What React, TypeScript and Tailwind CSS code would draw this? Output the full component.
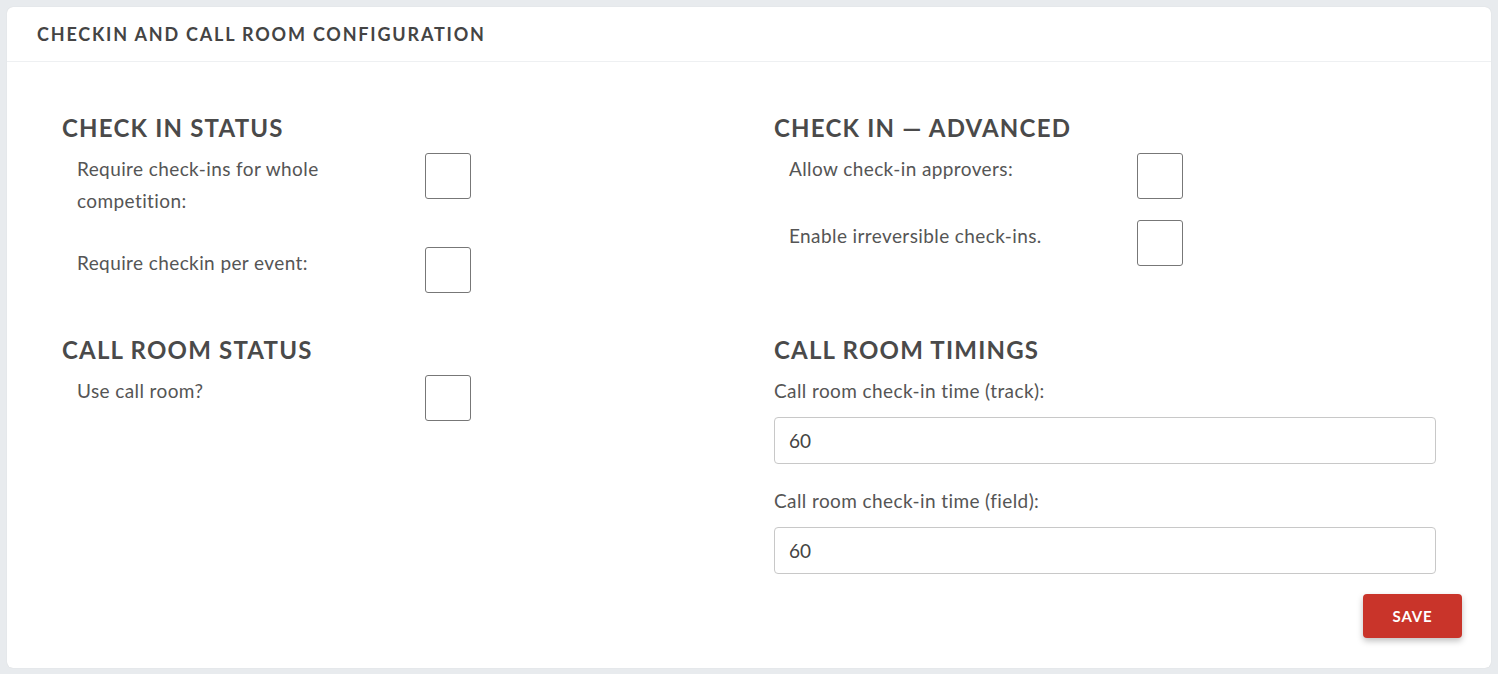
export default function App() {
  return (
    <div className="min-h-screen bg-[#e8ebee] p-[7px] font-['Lato',sans-serif] text-[#555]">
      <div className="bg-white rounded-[6px] shadow-[0_0_1px_rgba(0,0,0,0.15)]">
        <div className="h-[55px] border-b border-[#eef0f2] pl-[30px] flex items-center pt-[1px]">
          <h2 className="text-[18px] font-bold tracking-[1.8px] text-[#444] uppercase">
            Checkin and Call Room Configuration
          </h2>
        </div>

        <div className="pl-[55px] pr-[29px] pt-[53px] pb-[30px]">
          <div className="grid grid-cols-[712px_662px]">
            <section>
              <SectionTitle>Check in Status</SectionTitle>
              <CheckRow label="Require check-ins for whole competition:" />
              <CheckRow label="Require checkin per event:" />
            </section>
            <section>
              <SectionTitle>Check in — Advanced</SectionTitle>
              <CheckRow label="Allow check-in approvers:" />
              <CheckRow label="Enable irreversible check-ins." />
            </section>

            <section className="mt-[23px]">
              <SectionTitle>Call Room Status</SectionTitle>
              <CheckRow label="Use call room?" />
            </section>
            <section className="mt-[23px]">
              <SectionTitle>Call Room Timings</SectionTitle>
              <label className="block text-[19px] tracking-[0.4px] leading-[32px] mb-[10px]">
                Call room check-in time (track):
              </label>
              <input
                defaultValue="60"
                className="block w-full h-[47px] border border-[#c8c8c8] rounded-[4px] px-[14px] text-[19px] text-[#444] mb-[21px] outline-none"
              />
              <label className="block text-[19px] tracking-[0.4px] leading-[32px] mb-[10px]">
                Call room check-in time (field):
              </label>
              <input
                defaultValue="60"
                className="block w-full h-[47px] border border-[#c8c8c8] rounded-[4px] px-[14px] text-[19px] text-[#444] outline-none"
              />
            </section>
          </div>
          <div className="flex justify-end mt-[20px]">
            <button className="w-[99px] h-[44px] rounded-[4px] bg-[#c9342a] text-white text-[15px] font-bold tracking-[0.8px] shadow-[0_3px_6px_rgba(0,0,0,0.25)]">
              SAVE
            </button>
          </div>
        </div>
      </div>
    </div>
  );
}

function SectionTitle({ children }: { children: React.ReactNode }) {
  return (
    <h3 className="text-[24px] leading-[26px] font-bold tracking-[1.2px] uppercase text-[#4a4a4a] mb-[12px]">
      {children}
    </h3>
  );
}

function CheckRow({ label }: { label: string }) {
  return (
    <div className="flex items-start">
      <div className="w-[348px] pl-[15px] pr-[15px] text-[19px] tracking-[0.4px] leading-[32px] pb-[30px]">
        {label}
      </div>
      <div className="ml-[15px] pb-[21px]">
        <div className="w-[46px] h-[46px] border border-[#777] rounded-[3px] bg-white" />
      </div>
    </div>
  );
}
